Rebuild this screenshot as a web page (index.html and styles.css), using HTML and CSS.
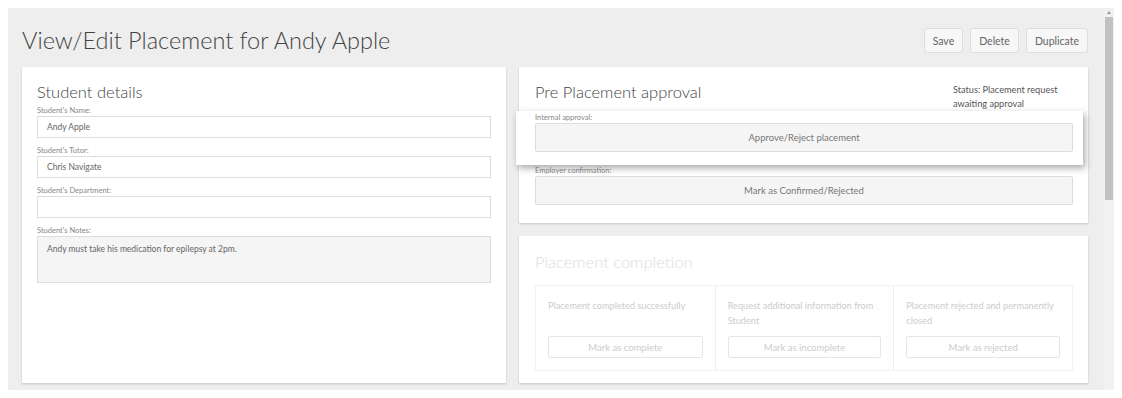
FILE: index.html
```html
<!DOCTYPE html>
<html lang="en">
<head>
<meta charset="UTF-8">
<link rel="stylesheet" href="styles.css">
<title>View/Edit Placement</title>
</head>
<body>
<div class="frame">
<div class="page">

<div class="header">
	<h1>View/Edit Placement for Andy Apple</h1>
	<div class="actions">
		<button class="btn">Save</button>
		<button class="btn">Delete</button>
		<button class="btn">Duplicate</button>
	</div>
</div>

<div class="columns">
	<div class="card student">
		<h2>Student details</h2>
		<div class="field">
			<label>Student's Name:</label>
			<div class="input">Andy Apple</div>
		</div>
		<div class="field">
			<label>Student's Tutor:</label>
			<div class="input">Chris Navigate</div>
		</div>
		<div class="field">
			<label>Student's Department:</label>
			<div class="input"></div>
		</div>
		<div class="field">
			<label>Student's Notes:</label>
			<div class="input notes">Andy must take his medication for epilepsy at 2pm.</div>
		</div>
	</div>

	<div class="side">
		<div class="card approval">
			<div class="card-head">
				<h2>Pre Placement approval</h2>
				<p class="status">Status: Placement request<br>awaiting approval</p>
			</div>
			<div class="highlight">
				<label>Internal approval:</label>
				<button class="wide">Approve/Reject placement</button>
			</div>
			<label>Employer confirmation:</label>
			<button class="wide">Mark as Confirmed/Rejected</button>
		</div>

		<div class="card completion">
			<h2>Placement completion</h2>
			<div class="choices">
				<div class="choice">
					<p>Placement completed successfully</p>
					<button class="ghost">Mark as complete</button>
				</div>
				<div class="choice">
					<p>Request additional information from Student</p>
					<button class="ghost">Mark as incomplete</button>
				</div>
				<div class="choice">
					<p>Placement rejected and permanently closed</p>
					<button class="ghost">Mark as rejected</button>
				</div>
			</div>
		</div>
	</div>
</div>

</div>
<div class="scrollbar">
	<div class="arrow"></div>
	<div class="thumb"></div>
</div>
</div>
</body>
</html>
```

FILE: styles.css
```css
* {
	box-sizing: border-box;
	margin: 0;
	padding: 0;
}

body {
	background: #fff;
	margin: 8px;
	font-family: Lato, "Liberation Sans", sans-serif;
	color: #555;
}

.frame {
	display: flex;
	width: 1106px;
	height: 382px;
	background: #eee;
	overflow: hidden;
}

.page {
	flex: 1;
	padding: 20px 16px 0 14px;
}

.header {
	display: flex;
	justify-content: space-between;
	align-items: flex-start;
	height: 25px;
}

h1 {
	font-weight: 300;
	font-size: 23.5px;
	line-height: 25px;
	color: #444;
}

.actions {
	display: flex;
	gap: 7px;
}

.btn {
	font-family: inherit;
	font-size: 10.5px;
	color: #666;
	background: #f7f7f7;
	border: 1px solid #ddd;
	border-radius: 3px;
	height: 25px;
	padding: 0 8px;
}

.columns {
	display: grid;
	grid-template-columns: 484px 1fr;
	gap: 13px;
	margin-top: 14px;
}

.card {
	background: #fff;
	box-shadow: 0 1px 2px rgba(0, 0, 0, 0.18);
}

h2 {
	font-weight: 300;
	font-size: 16.5px;
	line-height: 26px;
	color: #444;
}

label {
	display: block;
	font-size: 7.5px;
	line-height: 11px;
	color: #888;
}

/* student details */

.student {
	height: 316px;
	padding: 12px 15px;
}

.field {
	margin-bottom: 7px;
}

.input {
	height: 22px;
	border: 1px solid #ddd;
	font-size: 8.5px;
	line-height: 20px;
	color: #666;
	padding: 0 9px;
}

.notes {
	height: 47px;
	background: #f5f5f5;
	padding-top: 2px;
}

/* right column */

.side {
	display: flex;
	flex-direction: column;
	gap: 13px;
}

.approval {
	height: 156px;
	padding: 12px 15px 18px 16px;
}

.card-head {
	display: flex;
	justify-content: space-between;
	align-items: flex-start;
	height: 32px;
}

.status {
	font-size: 9.2px;
	line-height: 14px;
	color: #555;
	margin-top: 4px;
	width: 120px;
}

.highlight {
	position: relative;
	background: #fff;
	margin: 0 -10px 0 -19px;
	padding: 1px 10px 13px 19px;
	box-shadow: 2px 3px 7px rgba(0, 0, 0, 0.35);
}

.wide {
	display: block;
	width: 100%;
	height: 29px;
	font-family: inherit;
	font-size: 9.5px;
	color: #777;
	background: #f5f5f5;
	border: 1px solid #ddd;
	border-radius: 2px;
}

.completion {
	height: 147px;
	padding: 13px 15px 12px 16px;
}

.completion h2 {
	color: #ddd;
}

.choices {
	display: grid;
	grid-template-columns: repeat(3, 1fr);
	margin-top: 10px;
	border: 1px solid #f2f2f2;
}

.choice {
	padding: 12px 12px 12px 12px;
	border-left: 1px solid #eee;
}

.choice:first-child {
	border-left: 0;
}

.choice p {
	font-size: 9.2px;
	line-height: 15px;
	color: #ccc;
	height: 30px;
	margin-bottom: 8px;
}

.ghost {
	display: block;
	width: 100%;
	height: 22px;
	font-family: inherit;
	font-size: 9.5px;
	color: #ccc;
	background: #fff;
	border: 1px solid #e6e6e6;
	border-radius: 2px;
}

/* fake browser scrollbar */

.scrollbar {
	width: 10px;
	background: #f1f1f1;
	padding: 3px 1px 0 1px;
}

.arrow {
	width: 0;
	height: 0;
	margin: 0 auto 3px auto;
	border-left: 2px solid transparent;
	border-right: 2px solid transparent;
	border-bottom: 3px solid #999;
}

.thumb {
	height: 183px;
	background: #c1c1c1;
}
```
